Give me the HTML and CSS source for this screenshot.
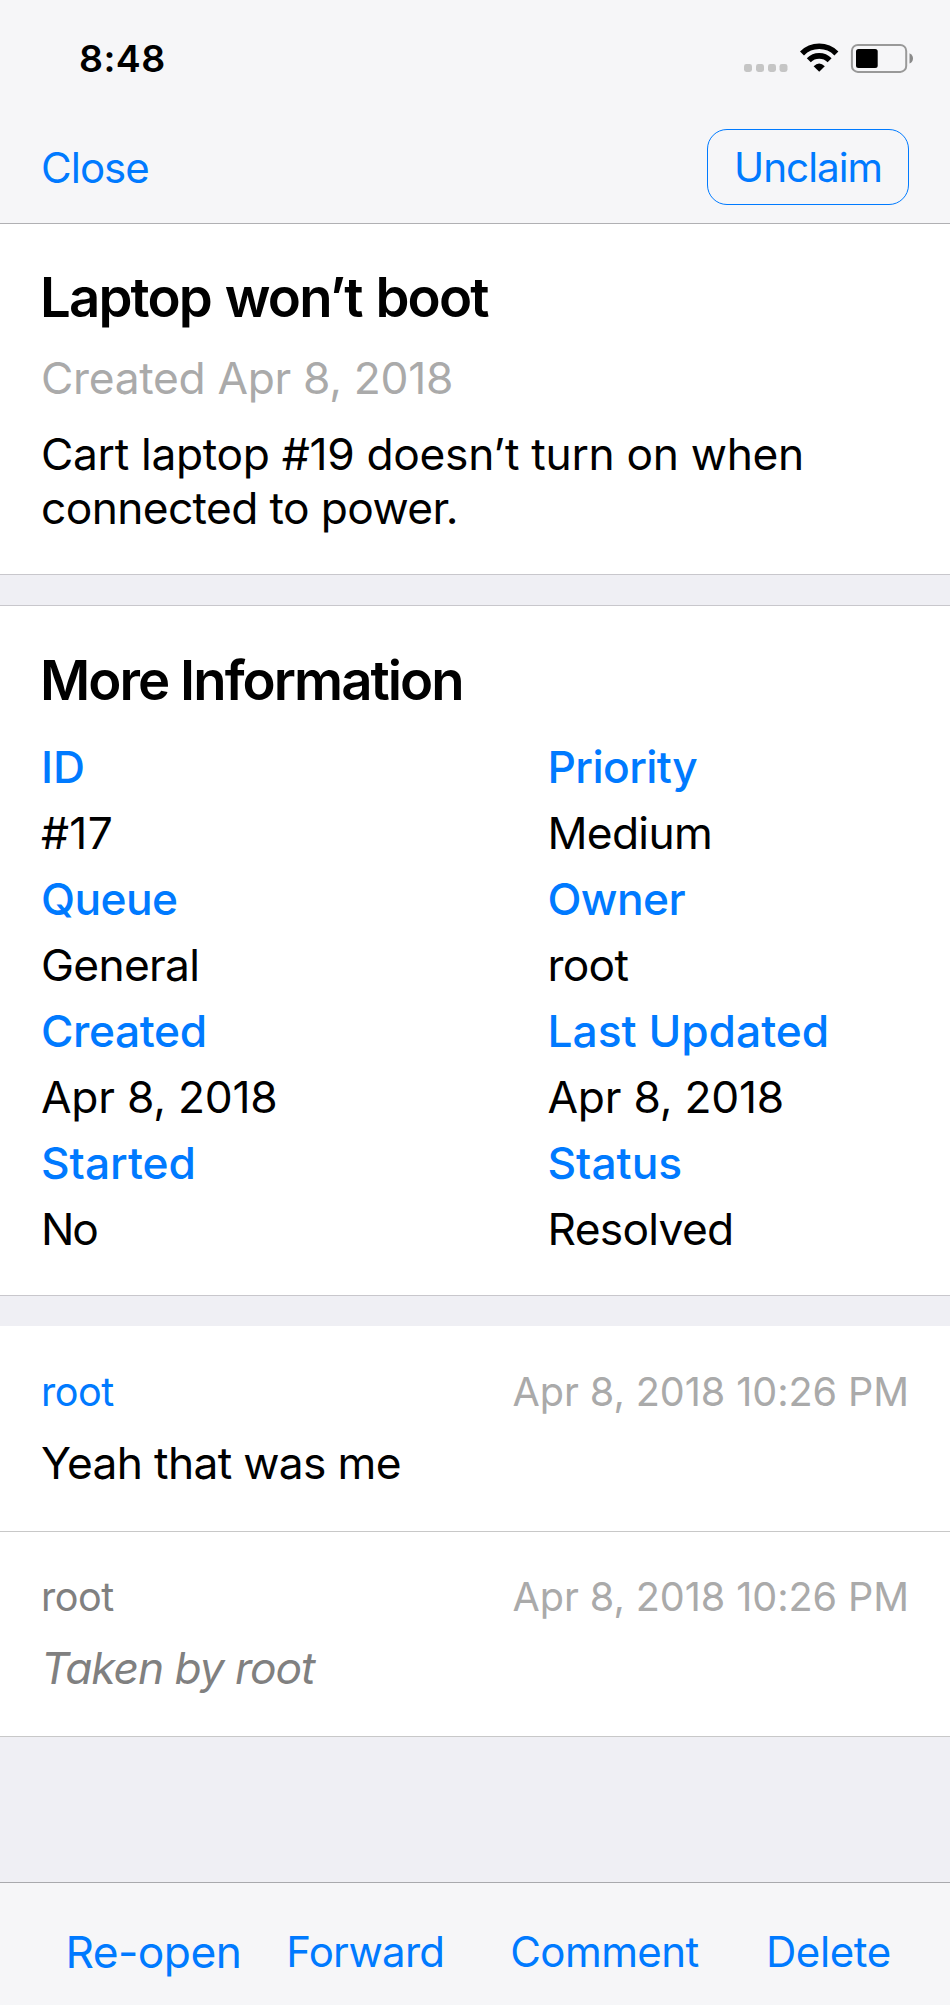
FILE: index.html
```html
<!DOCTYPE html>
<html lang="en">
<head>
<meta charset="utf-8">
<title>Ticket #17</title>
<link rel="stylesheet" href="styles.css">
</head>
<body>
<div class="screen">
  <header class="header">
    <div class="status-bar">
      <span class="time">8:48</span>
      <svg class="status-icons" width="170" height="30" viewBox="0 0 170 30" aria-hidden="true">
        <g fill="#c5c5c5">
          <rect x="0" y="21" width="8" height="8" rx="2.4"/>
          <rect x="12" y="21" width="8" height="8" rx="2.4"/>
          <rect x="24" y="21" width="8" height="8" rx="2.4"/>
          <rect x="35.5" y="21" width="8" height="8" rx="2.4"/>
        </g>
        <g fill="none" stroke="#000">
          <path stroke-width="5.6" d="M58 10.4A24.3 24.3 0 0 1 92.400 10.4"/>
          <path stroke-width="5.6" d="M64.800 17.200A14.700 14.700 0 0 1 85.600 17.200"/>
        </g>
        <path d="M69.600 23.200Q75.200 18 80.800 23.200L75.200 28.800Z"/>
        <rect x="107.900" y="1.900" width="54.300" height="27" rx="6" fill="none" stroke="#999" stroke-width="2"/>
        <rect x="112" y="6" width="21.700" height="19" rx="2.500"/>
        <path fill="#8a8a8a" d="M165.500 10.200Q169 12 169 15.400T165.500 20.600Z"/>
      </svg>
    </div>
    <nav class="nav-bar">
      <a class="close">Close</a>
      <a class="claim">Unclaim</a>
    </nav>
  </header>

  <main class="content">
    <section class="summary">
      <h1 class="title">Laptop won’t boot</h1>
      <p class="created">Created Apr 8, 2018</p>
      <p class="description">Cart laptop #19 doesn’t turn on when<br><span class="description-end">connected to power.</span></p>
    </section>

    <section class="details">
      <h2 class="title title-info">More Information</h2>
      <dl class="fields">
        <div class="field"><dt>ID</dt><dd class="roomy">#17</dd></div>
        <div class="field"><dt class="snug">Priority</dt><dd>Medium</dd></div>
        <div class="field"><dt class="snug">Queue</dt><dd>General</dd></div>
        <div class="field"><dt class="snug">Owner</dt><dd>root</dd></div>
        <div class="field"><dt class="even">Created</dt><dd class="date">Apr 8, 2018</dd></div>
        <div class="field"><dt>Last Updated</dt><dd class="date">Apr 8, 2018</dd></div>
        <div class="field"><dt>Started</dt><dd class="tight">No</dd></div>
        <div class="field"><dt>Status</dt><dd>Resolved</dd></div>
      </dl>
    </section>

    <section class="history">
      <article class="entry">
        <div class="entry-head"><span class="author">root</span><time class="stamp">Apr 8, 2018 10:26 PM</time></div>
        <p class="message">Yeah that was me</p>
      </article>
      <article class="entry entry-system">
        <div class="entry-head"><span class="author">root</span><time class="stamp">Apr 8, 2018 10:26 PM</time></div>
        <p class="message">Taken by root</p>
      </article>
    </section>
  </main>

  <footer class="toolbar">
    <a class="reopen">Re-open</a>
    <a class="forward">Forward</a>
    <a class="comment">Comment</a>
    <a class="delete">Delete</a>
  </footer>
</div>
</body>
</html>
```
FILE: styles.css
```css
* { box-sizing: border-box; }

body {
  margin: 0;
  font-family: Inter, "Liberation Sans", sans-serif;
  font-size: 44.3px;
  color: #000;
  background: #efeff4;
}

h1, h2, p, dl, dd { margin: 0; }

a { color: #007aff; white-space: nowrap; }

.screen {
  display: flex;
  flex-direction: column;
  width: 950px;
  height: 2005px;
}

/* Header */
.header {
  height: 224px;
  background: #f6f6f8;
  border-bottom: 1px solid #b0b0b3;
}

.status-bar {
  display: flex;
  align-items: center;
  justify-content: space-between;
  height: 116px;
  padding: 0 36px 0 79px;
}

.time { font-size: 37.5px; font-weight: 600; letter-spacing: 0.4px; }

.status-icons { display: block; }

.nav-bar {
  display: flex;
  align-items: center;
  justify-content: space-between;
  height: 102px;
  padding: 0 41px;
}

.close { font-size: 42px; letter-spacing: -0.98px; }

.claim {
  width: 202px;
  height: 76px;
  padding-left: 26px;
  border: 1px solid #007aff;
  border-radius: 20px;
  font-size: 40.5px;
  line-height: 76px;
  letter-spacing: -1px;
}

/* Content */
.content { flex: 1; }

.summary {
  height: 351px;
  padding: 35px 40px 0;
  background: #fff;
  border-bottom: 1px solid #c8c7cc;
}

.title {
  font-size: 54.5px;
  font-weight: 560;
  line-height: 76px;
  letter-spacing: -1.85px;
  word-spacing: 2px;
}

.title-info { letter-spacing: -1.95px; word-spacing: 0; }

.created {
  margin: 5px 0 0 1px;
  line-height: 76px;
  letter-spacing: -0.3px;
  color: #aaa;
}

.description {
  margin: 11px 0 0 1px;
  line-height: 54px;
  letter-spacing: -0.31px;
  white-space: nowrap;
}

.description-end { letter-spacing: -0.62px; }

.details {
  height: 691px;
  margin-top: 30px;
  padding: 36px 40px 0;
  background: #fff;
  border-top: 1px solid #c8c7cc;
  border-bottom: 1px solid #c8c7cc;
}

.fields {
  display: grid;
  grid-template-columns: 506.5px 1fr;
  margin: 16px 0 0 1px;
  line-height: 66px;
  white-space: nowrap;
}

.field dt { font-weight: 530; letter-spacing: 0; color: #007aff; }
.field dt.snug { letter-spacing: -0.6px; }
.field dt.even { letter-spacing: -0.4px; }
.field dd { letter-spacing: -0.7px; }
.field dd.roomy { letter-spacing: 0.31px; }
.field dd.date { letter-spacing: -0.22px; }
.field dd.tight { letter-spacing: -2px; }

.history { margin-top: 30px; }

.entry {
  height: 206px;
  padding: 40px 41px 0;
  background: #fff;
  border-bottom: 1px solid #c8c8c8;
}

.entry-head {
  display: flex;
  justify-content: space-between;
  font-size: 39.6px;
  line-height: 52px;
}

.author { letter-spacing: -0.47px; color: #007aff; }

.stamp { letter-spacing: -0.07px; color: #aaa; }

.message {
  margin-top: 18px;
  line-height: 54px;
  letter-spacing: -0.67px;
}

.entry-system { height: 205px; padding-top: 39px; }
.entry-system .author { color: #808080; }
.entry-system .message { font-style: italic; letter-spacing: -1.05px; color: #808080; }

/* Toolbar */
.toolbar {
  display: grid;
  grid-template-columns: 220.9px 224px 255.7px 1fr;
  height: 123px;
  padding: 42px 0 0 65.4px;
  background: #f6f6f8;
  border-top: 1px solid #a9a9ad;
  font-size: 42px;
  line-height: 54px;
}

.reopen { font-size: 44.3px; letter-spacing: -0.54px; }
.forward { letter-spacing: -0.76px; }
.comment { letter-spacing: -0.6px; }
.delete { letter-spacing: -0.42px; }
```
